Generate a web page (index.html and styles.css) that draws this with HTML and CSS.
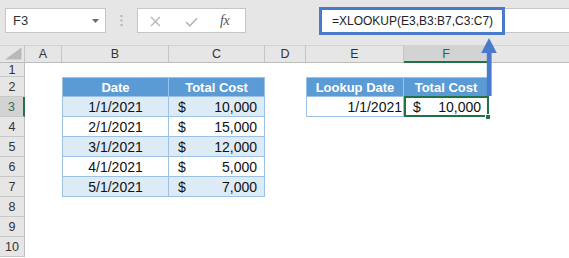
FILE: index.html
```html
<!DOCTYPE html>
<html>
<head>
<meta charset="utf-8">
<link rel="stylesheet" href="styles.css">
</head>
<body>
<div class="app">
  <div class="toolbar">
    <div class="namebox">
      <span>F3</span>
      <svg class="caret" width="7" height="4" viewBox="0 0 7 4"><polygon points="0,0 7,0 3.5,4" fill="#6a6a6a"/></svg>
    </div>
    <div class="grip">
      <svg width="3" height="11" viewBox="0 0 3 11"><rect x="0.5" y="0" width="2" height="2" fill="#b4b4b4"/><rect x="0.5" y="4.5" width="2" height="2" fill="#b4b4b4"/><rect x="0.5" y="9" width="2" height="2" fill="#b4b4b4"/></svg>
    </div>
    <div class="fxbox">
      <svg class="ico-x" width="11" height="11" viewBox="0 0 11 11"><path d="M1 1 L10 10 M10 1 L1 10" stroke="#b6b6b6" stroke-width="1.4" fill="none"/></svg>
      <svg class="ico-check" width="13" height="10" viewBox="0 0 13 10"><path d="M1 5 L4.8 8.8 L12 1.2" stroke="#b6b6b6" stroke-width="1.6" fill="none"/></svg>
      <span class="fx">fx</span>
    </div>
    <div class="formula">
      <div class="formula-note">=XLOOKUP(E3,B3:B7,C3:C7)</div>
    </div>
  </div>

  <div class="sheet">
    <div class="corner"><svg width="25" height="18" viewBox="0 0 25 18"><polygon points="21.5,1.5 21.5,13.5 5,13.5" fill="#b9b9b9"/></svg></div>
    <div class="colhead">A</div>
    <div class="colhead">B</div>
    <div class="colhead">C</div>
    <div class="colhead">D</div>
    <div class="colhead">E</div>
    <div class="colhead sel">F</div>
    <div class="colhead last"></div>

    <div class="rowhead r1">1</div>
    <div class="rowhead">2</div>
    <div class="rowhead sel">3</div>
    <div class="rowhead">4</div>
    <div class="rowhead">5</div>
    <div class="rowhead">6</div>
    <div class="rowhead">7</div>
    <div class="rowhead">8</div>
    <div class="rowhead">9</div>
    <div class="rowhead">10</div>

    <div class="tbl tbl-main">
      <div class="c hd">Date</div>
      <div class="c hd">Total Cost</div>
      <div class="c date band">1/1/2021</div>
      <div class="c money band"><span>$</span><span>10,000</span></div>
      <div class="c date">2/1/2021</div>
      <div class="c money"><span>$</span><span>15,000</span></div>
      <div class="c date band">3/1/2021</div>
      <div class="c money band"><span>$</span><span>12,000</span></div>
      <div class="c date">4/1/2021</div>
      <div class="c money"><span>$</span><span>5,000</span></div>
      <div class="c date band">5/1/2021</div>
      <div class="c money band"><span>$</span><span>7,000</span></div>
    </div>

    <div class="tbl tbl-lookup">
      <div class="c hd">Lookup Date</div>
      <div class="c hd">Total Cost</div>
      <div class="c right">1/1/2021</div>
      <div class="c money active"><span>$</span><span>10,000</span><i class="handle"></i></div>
    </div>
  </div>

  <svg class="arrow" width="18" height="62" viewBox="0 0 18 62">
    <polygon points="9,2 16.8,17 1.2,17" fill="#4a7bcb"/>
    <rect x="6.8" y="16" width="4.8" height="44" fill="#4a7bcb"/>
  </svg>
</div>
</body>
</html>
```

FILE: styles.css
```css
* { box-sizing: border-box; }

body {
  margin: 0;
  width: 569px;
  height: 258px;
  overflow: hidden;
  background: #fff;
  font-family: "Liberation Sans", Arial, sans-serif;
  color: #222;
}

.app { position: relative; }

.toolbar {
  height: 45px;
  background: #e6e6e6;
  display: flex;
  align-items: flex-start;
  padding-top: 8px;
  padding-left: 5px;
}

.namebox {
  width: 101px;
  height: 25px;
  background: #fff;
  border: 1px solid #c6c6c6;
  display: flex;
  align-items: center;
  justify-content: space-between;
  padding: 0 6px 0 7px;
  font-size: 13px;
  color: #333;
}

.grip {
  width: 31px;
  height: 25px;
  display: flex;
  align-items: center;
  justify-content: center;
}

.fxbox {
  width: 109px;
  height: 25px;
  background: #fff;
  border: 1px solid #c6c6c6;
  display: flex;
  align-items: center;
  padding-left: 12px;
}

.ico-x { margin-top: 1px; }
.ico-check { margin-left: 24px; margin-top: 2px; }

.fx {
  margin-left: 22px;
  font-family: "Liberation Serif", "Times New Roman", serif;
  font-style: italic;
  font-size: 14px;
  color: #555;
  letter-spacing: -0.5px;
}

.formula {
  position: relative;
  flex: 1;
  height: 25px;
  margin-left: 74px;
  background: #fff;
  border-top: 1px solid #c6c6c6;
  border-bottom: 1px solid #c6c6c6;
}

.formula-note {
  position: absolute;
  left: -1px;
  top: -2px;
  width: 186px;
  height: 28px;
  border: 3px solid #4a7bcb;
  background: #fff;
  display: flex;
  align-items: center;
  padding-left: 10px;
  font-size: 12px;
  color: #222;
}

.sheet {
  display: grid;
  grid-template-columns: 25px 37px 107px 96px 41px 98px 85px 1fr;
  grid-template-rows: 18px 14px repeat(9, 20px);
}

.corner,
.colhead {
  background: #e6e6e6;
  border-top: 1px solid #d2d2d2;
  border-bottom: 1px solid #bdbdbd;
  border-right: 1px solid #c4c4c4;
}

.colhead {
  display: flex;
  align-items: center;
  justify-content: center;
  font-size: 12.5px;
  color: #333;
}

.colhead.last { border-right: none; }

.colhead.sel {
  background: #d3d3d3;
  border-bottom: 2px solid #217346;
  color: #1e6b40;
}

.rowhead {
  grid-column: 1;
  background: #e6e6e6;
  border-right: 1px solid #bdbdbd;
  border-bottom: 1px solid #c8c8c8;
  display: flex;
  align-items: center;
  justify-content: center;
  font-size: 12.5px;
  color: #333;
  padding-top: 1px;
}

.rowhead.r1 { padding-top: 0; }

.rowhead.sel {
  background: #d3d3d3;
  border-right: 2px solid #217346;
  color: #3d6b52;
}

.tbl {
  display: grid;
  border-left: 1px solid #9bc2e6;
  border-top: 1px solid #9bc2e6;
}

.tbl-main {
  grid-column: 3 / 5;
  grid-row: 3 / 9;
  grid-template-columns: 106px 96px;
  grid-template-rows: 19px repeat(5, 20px);
}

.tbl-lookup {
  grid-column: 6 / 8;
  grid-row: 3 / 5;
  grid-template-columns: 97px 85px;
  grid-template-rows: 19px 20px;
}

.c {
  border-right: 1px solid #9bc2e6;
  border-bottom: 1px solid #9bc2e6;
  display: flex;
  align-items: center;
  font-size: 14px;
  color: #111;
  padding-top: 1px;
}

.hd {
  background: #5b9bd5;
  color: #fff;
  font-weight: bold;
  font-size: 13px;
  justify-content: center;
  padding-top: 0;
}

.band { background: #ddebf7; }

.date { justify-content: center; }

.right {
  justify-content: flex-end;
  padding-right: 1px;
}

.money {
  justify-content: space-between;
  padding-left: 9px;
  padding-right: 7px;
}

.active { position: relative; }

.active::before {
  content: "";
  position: absolute;
  left: 0;
  right: -1px;
  top: -1px;
  bottom: -1px;
  border: 2px solid #217346;
}

.handle {
  position: absolute;
  right: -3px;
  bottom: -4px;
  width: 6px;
  height: 6px;
  background: #217346;
  border: 1px solid #fff;
}

.arrow {
  position: absolute;
  left: 480px;
  top: 36px;
}
```
